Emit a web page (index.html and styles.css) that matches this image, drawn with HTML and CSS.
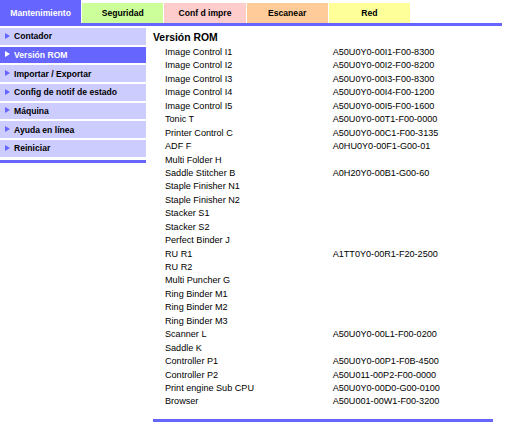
FILE: index.html
```html
<!DOCTYPE html>
<html>
<head>
<meta charset="utf-8">
<link rel="stylesheet" href="styles.css">
</head>
<body>
<div class="tabs">
  <div class="tab tab-main">Mantenimiento</div>
  <div class="tab tab-sec">Seguridad</div>
  <div class="tab tab-conf">Conf d impre</div>
  <div class="tab tab-scan">Escanear</div>
  <div class="tab tab-red">Red</div>
</div>
<div class="tabline"></div>
<div class="main">
  <div class="side">
    <ul class="menu">
      <li class="item">Contador</li>
      <li class="item active">Versión ROM</li>
      <li class="item">Importar / Exportar</li>
      <li class="item">Config de notif de estado</li>
      <li class="item">Máquina</li>
      <li class="item">Ayuda en línea</li>
      <li class="item">Reiniciar</li>
    </ul>
    <div class="sideline"></div>
  </div>
  <div class="content">
    <h1 class="title">Versión ROM</h1>
    <div class="rows">
      <div class="name">Image Control I1</div><div class="val">A50U0Y0-00I1-F00-8300</div>
      <div class="name">Image Control I2</div><div class="val">A50U0Y0-00I2-F00-8200</div>
      <div class="name">Image Control I3</div><div class="val">A50U0Y0-00I3-F00-8300</div>
      <div class="name">Image Control I4</div><div class="val">A50U0Y0-00I4-F00-1200</div>
      <div class="name">Image Control I5</div><div class="val">A50U0Y0-00I5-F00-1600</div>
      <div class="name">Tonic T</div><div class="val">A50U0Y0-00T1-F00-0000</div>
      <div class="name">Printer Control C</div><div class="val">A50U0Y0-00C1-F00-3135</div>
      <div class="name">ADF F</div><div class="val">A0HU0Y0-00F1-G00-01</div>
      <div class="name">Multi Folder H</div><div class="val"></div>
      <div class="name">Saddle Stitcher B</div><div class="val">A0H20Y0-00B1-G00-60</div>
      <div class="name">Staple Finisher N1</div><div class="val"></div>
      <div class="name">Staple Finisher N2</div><div class="val"></div>
      <div class="name">Stacker S1</div><div class="val"></div>
      <div class="name">Stacker S2</div><div class="val"></div>
      <div class="name">Perfect Binder J</div><div class="val"></div>
      <div class="name">RU R1</div><div class="val">A1TT0Y0-00R1-F20-2500</div>
      <div class="name">RU R2</div><div class="val"></div>
      <div class="name">Multi Puncher G</div><div class="val"></div>
      <div class="name">Ring Binder M1</div><div class="val"></div>
      <div class="name">Ring Binder M2</div><div class="val"></div>
      <div class="name">Ring Binder M3</div><div class="val"></div>
      <div class="name">Scanner L</div><div class="val">A50U0Y0-00L1-F00-0200</div>
      <div class="name">Saddle K</div><div class="val"></div>
      <div class="name">Controller P1</div><div class="val">A50U0Y0-00P1-F0B-4500</div>
      <div class="name">Controller P2</div><div class="val">A50U011-00P2-F00-0000</div>
      <div class="name">Print engine Sub CPU</div><div class="val">A50U0Y0-00D0-G00-0100</div>
      <div class="name">Browser</div><div class="val">A50U001-00W1-F00-3200</div>
    </div>
    <div class="bottomline"></div>
  </div>
</div>
</body>
</html>
```

FILE: styles.css
```css
html, body {
  margin: 0;
  padding: 0;
  background: #ffffff;
}

body {
  font-family: "Liberation Sans", Arial, sans-serif;
  color: #000000;
  width: 517px;
}

.tabs {
  display: flex;
  align-items: flex-end;
  height: 23px;
}

.tab {
  width: 81.2px;
  margin-right: 1px;
  height: 20px;
  display: flex;
  align-items: center;
  justify-content: center;
  font-size: 8.6px;
  font-weight: bold;
  color: #000000;
  padding-top: 0;
  box-sizing: border-box;
}

.tab-main {
  height: 23px;
  background: #6666ff;
  color: #ffffff;
  padding-top: 2px;
}

.tab-sec { background: #ccff99; }
.tab-conf { background: #ffcccc; }
.tab-scan { background: #ffcc99; }
.tab-red { background: #ffff99; }

.tabline {
  width: 502px;
  height: 3px;
  background: #6666ff;
}

.main {
  display: flex;
  align-items: flex-start;
}

.side {
  width: 146px;
  margin-top: 2px;
}

.menu {
  list-style: none;
  margin: 0;
  padding: 0;
}

.item {
  height: 16.67px;
  margin-bottom: 2px;
  background: #ccccff;
  font-size: 8.6px;
  font-weight: bold;
  display: flex;
  align-items: center;
  padding-left: 5px;
  box-sizing: border-box;
}

.item::before {
  content: "";
  display: block;
  width: 0;
  height: 0;
  border-left: 5px solid #6666ff;
  border-top: 3px solid transparent;
  border-bottom: 3px solid transparent;
  margin-right: 4px;
  margin-top: -1px;
}

.item.active {
  background: #6666ff;
  color: #ffffff;
}

.item.active::before {
  border-left-color: #ffffff;
}

.sideline {
  margin-top: 3px;
  height: 3px;
  background: #6666ff;
}

.content {
  margin-left: 7px;
  width: 340px;
}

.title {
  margin: 5px 0 0 0;
  font-size: 10.4px;
  line-height: 14px;
  font-weight: bold;
}

.rows {
  margin-top: 1px;
  padding-left: 12px;
  display: grid;
  grid-template-columns: 167.7px auto;
  font-size: 9.1px;
  line-height: 13.45px;
}

.name, .val {
  white-space: nowrap;
  height: 13.45px;
}

.bottomline {
  margin-top: 10.5px;
  height: 3px;
  background: #6666ff;
}
```
